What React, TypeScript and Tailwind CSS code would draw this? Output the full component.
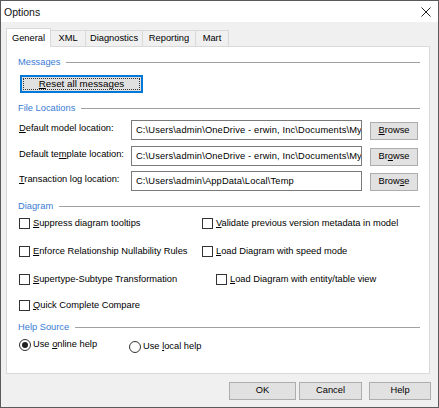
import React from "react";

const U = ({ children }: { children: React.ReactNode }) => <span className="underline underline-offset-[1px]">{children}</span>;

function Heading({ label }: { label: string }) {
  return (
    <div className="flex items-center h-[13px]">
      <span className="text-[#3a7bd5] leading-[13px]">{label}</span>
      <div className="flex-1 h-px bg-[#a0a0a0] ml-[6px]" />
    </div>
  );
}

function Checkbox({ children }: { children: React.ReactNode }) {
  return (
    <div className="flex items-center h-[13px]">
      <div className="w-[11px] h-[11px] border border-[#333] bg-white shrink-0" />
      <span className="ml-[3px] leading-[13px] whitespace-nowrap">{children}</span>
    </div>
  );
}

function Radio({ checked, children }: { checked?: boolean; children: React.ReactNode }) {
  return (
    <div className="flex items-center h-[13px]">
      <div className="w-[12px] h-[12px] rounded-full border border-[#333] bg-white shrink-0 flex items-center justify-center">
        {checked && <div className="w-[6px] h-[6px] rounded-full bg-[#222]" />}
      </div>
      <span className="ml-[2px] leading-[13px] whitespace-nowrap">{children}</span>
    </div>
  );
}

function PathRow({ label, value, browse }: { label: React.ReactNode; value: string; browse: React.ReactNode }) {
  return (
    <div className="flex items-center h-[20px]">
      <div className="w-[113px] pl-px -mt-[3px] whitespace-nowrap">{label}</div>
      <div className="w-[231px] h-[20px] border border-[#7a7a7a] bg-white overflow-hidden whitespace-nowrap pl-[4px] leading-[18px] tracking-[0.15px]">
        {value}
      </div>
      <div className="ml-[8px] mt-[2px] w-[48px] h-[18px] border border-[#adadad] bg-[#e1e1e1] flex items-center justify-center">
        <span>{browse}</span>
      </div>
    </div>
  );
}

export default function App() {
  return (
    <div
      className="w-[439px] h-[408px] border border-[#5a5a5a] bg-[#f0f0f0] text-black flex flex-col"
      style={{ fontFamily: '"Liberation Sans", Arial, sans-serif', fontSize: "9.3px" }}
    >
      {/* Title bar */}
      <div className="h-[21px] bg-white flex items-center justify-between shrink-0">
        <span className="ml-[3px] text-[10.5px] leading-[14px] text-[#111]">Options</span>
        <svg width="10" height="10" viewBox="0 0 10 10" className="mr-[7px]">
          <path d="M0.5 0.5 L9.5 9.5 M9.5 0.5 L0.5 9.5" stroke="#222" strokeWidth="1" />
        </svg>
      </div>

      <div className="flex flex-col px-[5px] mt-[6px]">
        {/* Tabs */}
        <div className="flex items-end h-[18px]">
          <div className="relative z-10 w-[45px] h-[19px] -mb-px bg-white border border-b-0 border-[#d9d9d9] flex items-start justify-center pt-[3px]">
            General
          </div>
          <div className="w-[35px] h-[16px] border-t border-r border-[#d9d9d9] flex items-center justify-center">XML</div>
          <div className="w-[57px] h-[16px] border-t border-r border-[#d9d9d9] flex items-center justify-center">Diagnostics</div>
          <div className="w-[53px] h-[16px] border-t border-r border-[#d9d9d9] flex items-center justify-center">Reporting</div>
          <div className="w-[33px] h-[16px] border-t border-r border-[#d9d9d9] flex items-center justify-center">Mart</div>
        </div>

        {/* Panel */}
        <div className="w-[424px] h-[328px] border border-[#d9d9d9] bg-white flex flex-col pl-[11px] pr-[9px]">
          <div className="mt-[9px]">
            <Heading label="Messages" />
          </div>
          <div className="mt-[6px] ml-[2px] relative w-[123px] h-[18px] border-2 border-[#0078d7] bg-[#e1e1e1] flex items-center justify-center">
            <div className="absolute inset-[1px] border border-dotted border-[#333]" />
            <span className="relative text-[9.8px]"><U>R</U>eset all messages</span>
          </div>

          <div className="mt-[9px]">
            <Heading label="File Locations" />
          </div>
          <div className="mt-[5px]">
            <PathRow
              label={<><U>D</U>efault model location:</>}
              value="C:\Users\admin\OneDrive - erwin, Inc\Documents\My"
              browse={<><U>B</U>rowse</>}
            />
          </div>
          <div className="mt-[6px]">
            <PathRow
              label={<>Default te<U>m</U>plate location:</>}
              value="C:\Users\admin\OneDrive - erwin, Inc\Documents\My"
              browse={<>Br<U>o</U>wse</>}
            />
          </div>
          <div className="mt-[5px]">
            <PathRow
              label={<><U>T</U>ransaction log location:</>}
              value="C:\Users\admin\AppData\Local\Temp"
              browse={<>Brow<U>s</U>e</>}
            />
          </div>

          <div className="mt-[9px]">
            <Heading label="Diagram" />
          </div>
          <div className="grid grid-cols-[183px_1fr] ml-px mt-[4px] gap-y-[15px]">
            <Checkbox><U>S</U>uppress diagram tooltips</Checkbox>
            <Checkbox><U>V</U>alidate previous version metadata in model</Checkbox>
            <Checkbox><U>E</U>nforce Relationship Nullability Rules</Checkbox>
            <Checkbox><U>L</U>oad Diagram with speed mode</Checkbox>
            <Checkbox><U>S</U>upertype-Subtype Transformation</Checkbox>
            <div className="ml-[14px]">
              <Checkbox><U>L</U>oad Diagram with entity/table view</Checkbox>
            </div>
          </div>
          <div className="mt-[13px] ml-px">
            <Checkbox><U>Q</U>uick Complete Compare</Checkbox>
          </div>

          <div className="mt-[9px]">
            <Heading label="Help Source" />
          </div>
          <div className="flex mt-[4px] ml-px">
            <div className="w-[110px]">
              <Radio checked>Use <U>o</U>nline help</Radio>
            </div>
            <div className="mt-[2px]">
              <Radio>Use <U>l</U>ocal help</Radio>
            </div>
          </div>
        </div>

        {/* Bottom buttons */}
        <div className="flex mt-[8px] pl-[223px]">
          <div className="w-[67px] h-[18px] border border-[#adadad] bg-[#e1e1e1] flex items-center justify-center">OK</div>
          <div className="ml-[3px] w-[63px] h-[18px] border border-[#adadad] bg-[#e1e1e1] flex items-center justify-center">Cancel</div>
          <div className="ml-[7px] w-[62px] h-[18px] border border-[#adadad] bg-[#e1e1e1] flex items-center justify-center">Help</div>
        </div>
      </div>
    </div>
  );
}
